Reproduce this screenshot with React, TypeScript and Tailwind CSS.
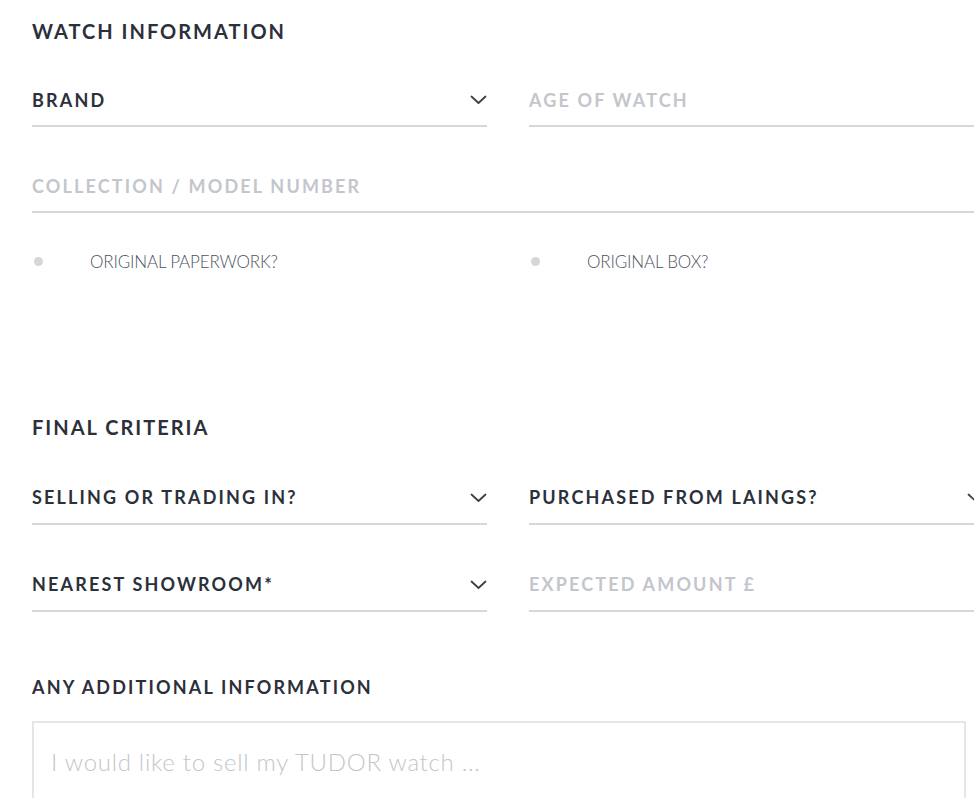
const labelDark = 'text-[18px] font-bold uppercase tracking-[0.12em] text-[#2b303b]';
const labelMuted = 'text-[18px] font-bold uppercase tracking-[0.12em] text-[#c3c6cc]';

type FieldProps = {
  label: string;
  muted?: boolean;
  select?: boolean;
  className?: string;
};

function Chevron() {
  return (
    <svg width="17" height="10" viewBox="0 0 17 10" fill="none" className="text-[#3a3f4a]">
      <polyline points="1.5,1.5 8.5,8 15.5,1.5" stroke="currentColor" strokeWidth="1.8" strokeLinecap="round" strokeLinejoin="round" />
    </svg>
  );
}

function Field({ label, muted, select, className = '' }: FieldProps) {
  return (
    <div className={`flex h-[52px] items-center justify-between border-b-2 border-[#d8d8d8] ${className}`}>
      <span className={muted ? labelMuted : labelDark}>{label}</span>
      {select ? <Chevron /> : null}
    </div>
  );
}

function Radio({ label }: { label: string }) {
  return (
    <label className="flex items-center">
      <span className="ml-[2px] block h-[9px] w-[9px] rounded-full bg-[#d6d6d6]" />
      <span className="ml-[47px] text-[17px] font-light uppercase tracking-[-0.01em] text-[#4d5260]">
        {label}
      </span>
    </label>
  );
}

export default function App() {
  return (
    <div
      className="h-[798px] w-[974px] overflow-hidden bg-white"
      style={{ fontFamily: 'Lato, "Noto Sans", sans-serif' }}
    >
      <div className="w-[952px] pl-[32px]">
        <h2 className="pt-[16px] text-[20px] font-bold uppercase tracking-[0.1em] text-[#2b303b]">
          Watch Information
        </h2>

        <div className="mt-[29px] grid grid-cols-[455px_455px] gap-x-[42px]">
          <Field label="Brand" select />
          <Field label="Age of watch" muted />
        </div>

        <Field label="Collection / Model number" muted className="mt-[34px] w-[952px]" />

        <div className="mt-[36px] grid grid-cols-[455px_455px] gap-x-[42px]">
          <Radio label="Original paperwork?" />
          <Radio label="Original box?" />
        </div>

        <h2 className="mt-[137px] text-[20px] font-bold uppercase tracking-[0.1em] text-[#2b303b]">
          Final Criteria
        </h2>

        <div className="mt-[31px] grid grid-cols-[455px_455px] gap-x-[42px] gap-y-[35px]">
          <Field label="Selling or trading in?" select />
          <Field label="Purchased from Laings?" select />
          <Field label="Nearest showroom*" select />
          <Field label="Expected amount £" muted />
        </div>

        <h3 className="mt-[62px] text-[18px] font-bold uppercase tracking-[0.12em] text-[#2b303b]">
          Any additional information
        </h3>

        <div className="mt-[20px] h-[120px] w-[934px] border-2 border-[#e6e6e6] px-[17px] pt-[21px]">
          <p className="text-[24px] font-light tracking-[0.03em] text-[#c4c5ca]">
            I would like to sell my TUDOR watch ...
          </p>
        </div>
      </div>
    </div>
  );
}
